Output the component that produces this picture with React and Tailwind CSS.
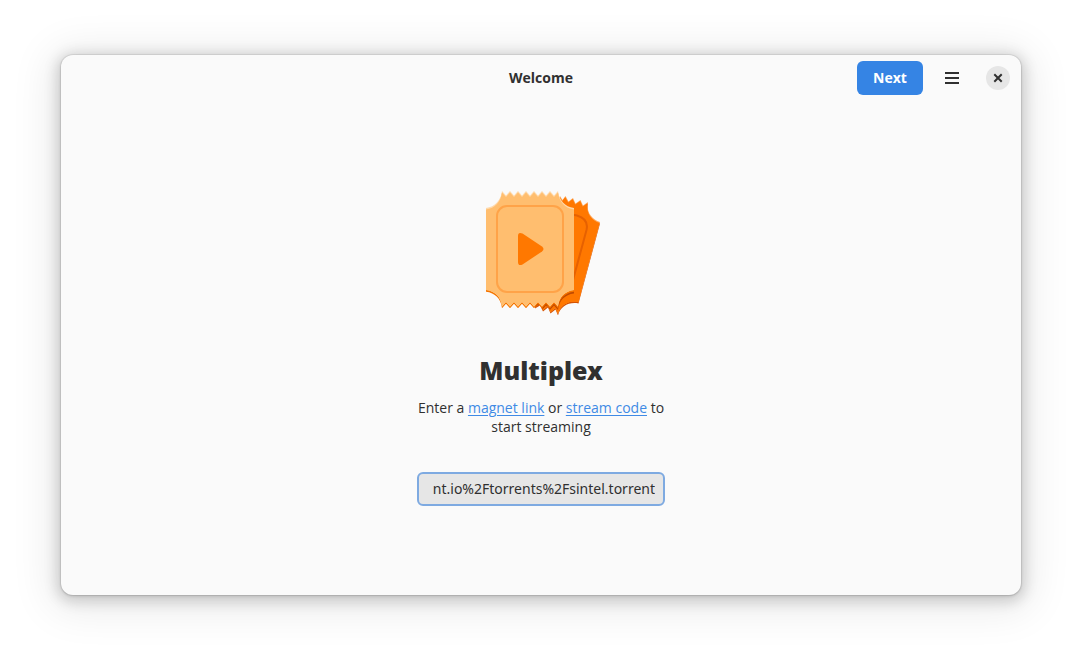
function TicketLogo() {
  const back =
    'M66 70 L84 16 L86.500 20 L89.500 16 L92.500 21.500 L97 18 L99.500 23.500 L104.500 20 L107 25.500 L112 22 C110 31 115 39 124 42 L102.500 122 C93 120 84 125 82 134 L79.500 128 L74.500 132 L72 126 L67 130 L64 124 L59 127 Z'
  const front =
    'M10 28 C19 27 25 20 26 11 L30 15.500 L34 11 L38 15.500 L42 11 L46 15.500 L50 11 L54 15.500 L58 11 L62 15.500 L66 11 L70 15.500 L74 11 L78 15.500 L82 11 C83 20 89 27 98 28 V110 C89 111 83 117 82 126.500 L78 122 L74 126.500 L70 122 L66 126.500 L62 122 L58 126.500 L54 122 L50 126.500 L46 122 L42 126.500 L38 122 L34 126.500 L30 122 L26 126.500 C25 117 19 111 10 110 Z'
  return (
    <svg className="h-[135px] w-[135px]" viewBox="0 0 135 135" role="img" aria-label="Multiplex logo">
      <defs>
        <clipPath id="front-edge">
          <path d={front} />
        </clipPath>
        <clipPath id="back-edge">
          <path d={back} />
        </clipPath>
      </defs>
      <path d={back} fill="#d65200" transform="translate(0 1.500)" />
      <path d={back} fill="#ffa95c" />
      <g clipPath="url(#back-edge)">
        <path d={back} fill="#ff7800" transform="translate(-0.300 1)" />
        <path d="M80 110 H105 V124 H80 Z" fill="#ff7800" />
        <path d="M93 34 L101 35.500 Q113 39 110.500 50 L97 100" fill="none" stroke="#e66100" strokeWidth="2" />
        <path d={front} fill="#c04a00" transform="translate(0 3.500)" />
      </g>
      <path d={front} fill="#f57500" transform="translate(0 1.800)" />
      <path d={front} fill="#ffd9aa" />
      <g clipPath="url(#front-edge)">
        <path d={front} fill="#ffbe6f" transform="translate(0 1.500)" />
      </g>
      <rect x="21" y="26" width="66" height="86" rx="10" fill="none" stroke="#ffa348" strokeWidth="2" />
      <path d="M42 56 Q42 51.500 46.500 53.500 L66 66.500 Q69 69 66 71.500 L46.500 84.500 Q42 86.500 42 82 Z" fill="#ff7800" />
    </svg>
  )
}

export default function App() {
  return (
    <div className="flex min-h-screen flex-col bg-white px-[61px] pt-[55px] pb-[67px] font-['Noto_Sans','Open_Sans',sans-serif] text-[14px] text-[#303030]">
      <div className="flex flex-1 flex-col rounded-xl bg-[#fafafa] shadow-[0_0_0_1px_rgba(0,0,0,0.06),0_1px_3px_rgba(0,0,0,0.15),0_3px_14px_4px_rgba(0,0,0,0.16),0_5px_40px_12px_rgba(0,0,0,0.08)]">
        <header className="grid grid-cols-[1fr_auto_1fr] items-center px-[11px] py-1.5">
          <h1 className="col-start-2 pb-0.5 font-['Open_Sans','Noto_Sans',sans-serif] font-bold">Welcome</h1>
          <div className="flex items-center justify-end">
            <button type="button" className="h-[34px] w-[66px] rounded-md bg-[#3584e4] pb-0.5 font-['Open_Sans','Noto_Sans',sans-serif] font-bold text-white">
              Next
            </button>
            <button type="button" aria-label="Main menu" className="ml-3 flex size-[34px] items-center justify-center">
              <svg className="size-4" viewBox="0 0 16 16">
                <path d="M1 2h14v2H1zM1 7h14v2H1zM1 12h14v2H1z" fill="#303030" />
              </svg>
            </button>
            <button type="button" aria-label="Close" className="ml-[17px] flex size-6 items-center justify-center rounded-full bg-[#e6e6e6]">
              <svg className="size-4" viewBox="0 0 16 16">
                <path d="M5 5l6 6M11 5l-6 6" fill="none" stroke="#303030" strokeWidth="2" strokeLinecap="square" />
              </svg>
            </button>
          </div>
        </header>

        <main className="flex flex-1 flex-col items-center pt-[79px]">
          <div className="pl-1">
            <TicketLogo />
          </div>
          <h2 className="mt-[35px] text-[25px] leading-10 font-black">Multiplex</h2>
          <p className="mt-2 text-center font-['Open_Sans','Noto_Sans',sans-serif] leading-[19px]">
            Enter a{' '}
            <a href="#magnet" className="text-[#3f8ae5] underline underline-offset-2">magnet link</a>
            {' '}or{' '}
            <a href="#stream" className="text-[#3f8ae5] underline underline-offset-2">stream code</a>
            {' '}to
            <br />
            start streaming
          </p>
          <input
            type="text"
            aria-label="Magnet link or stream code"
            defaultValue="nt.io%2Ftorrents%2Fsintel.torrent"
            className="mt-9 h-[34px] w-[248px] rounded-md border-2 border-[#7eaae1] bg-[#e6e6e6] px-2 pb-0.5 text-right outline-none"
          />
        </main>
      </div>
    </div>
  )
}
